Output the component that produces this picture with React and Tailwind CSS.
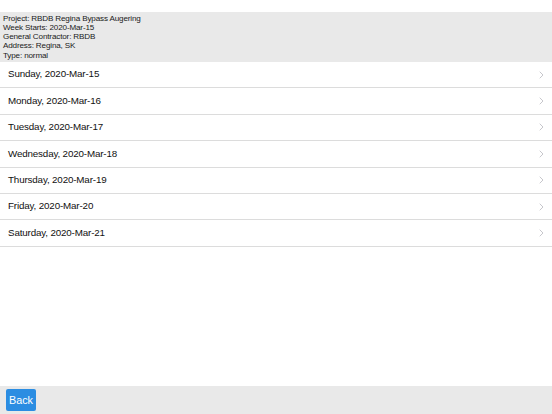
const INFO = [
  'Project: RBDB Regina Bypass Augering',
  'Week Starts: 2020-Mar-15',
  'General Contractor: RBDB',
  'Address: Regina, SK',
  'Type: normal',
]

const DAYS = [
  'Sunday, 2020-Mar-15',
  'Monday, 2020-Mar-16',
  'Tuesday, 2020-Mar-17',
  'Wednesday, 2020-Mar-18',
  'Thursday, 2020-Mar-19',
  'Friday, 2020-Mar-20',
  'Saturday, 2020-Mar-21',
]

function Chevron() {
  return (
    <svg width="5" height="8" viewBox="0 0 5 8" fill="none">
      <path d="M1 1l3 3-3 3" stroke="#c7c7cc" strokeWidth="1" strokeLinecap="round" strokeLinejoin="round" />
    </svg>
  )
}

export default function App() {
  return (
    <div className="h-screen flex flex-col bg-white text-[#111]" style={{ fontFamily: '"Liberation Sans", Arial, sans-serif' }}>
      <div className="h-[12px]" />
      <div className="bg-[#e9e9e9] px-[3px] pt-[1.5px] h-[50px]">
        {INFO.map(line => (
          <div key={line} className="text-[8.1px] leading-[9.3px] tracking-[-0.15px] text-[#1a1a1a]">{line}</div>
        ))}
      </div>
      <div>
        {DAYS.map(day => (
          <div key={day} className="h-[26.4px] flex items-center justify-between pl-[8px] pr-[8px] border-b border-[#dcdcdc]">
            <span className="text-[9.8px] tracking-[-0.15px] text-[#111]">{day}</span>
            <Chevron />
          </div>
        ))}
      </div>
      <div className="flex-1" />
      <div className="h-[28px] bg-[#e9e9e9] flex items-center px-[6px]">
        <button className="h-[22px] w-[30px] rounded-[2px] bg-[#2b8de2] text-white text-[10.8px] flex items-center justify-center">
          Back
        </button>
      </div>
    </div>
  )
}
